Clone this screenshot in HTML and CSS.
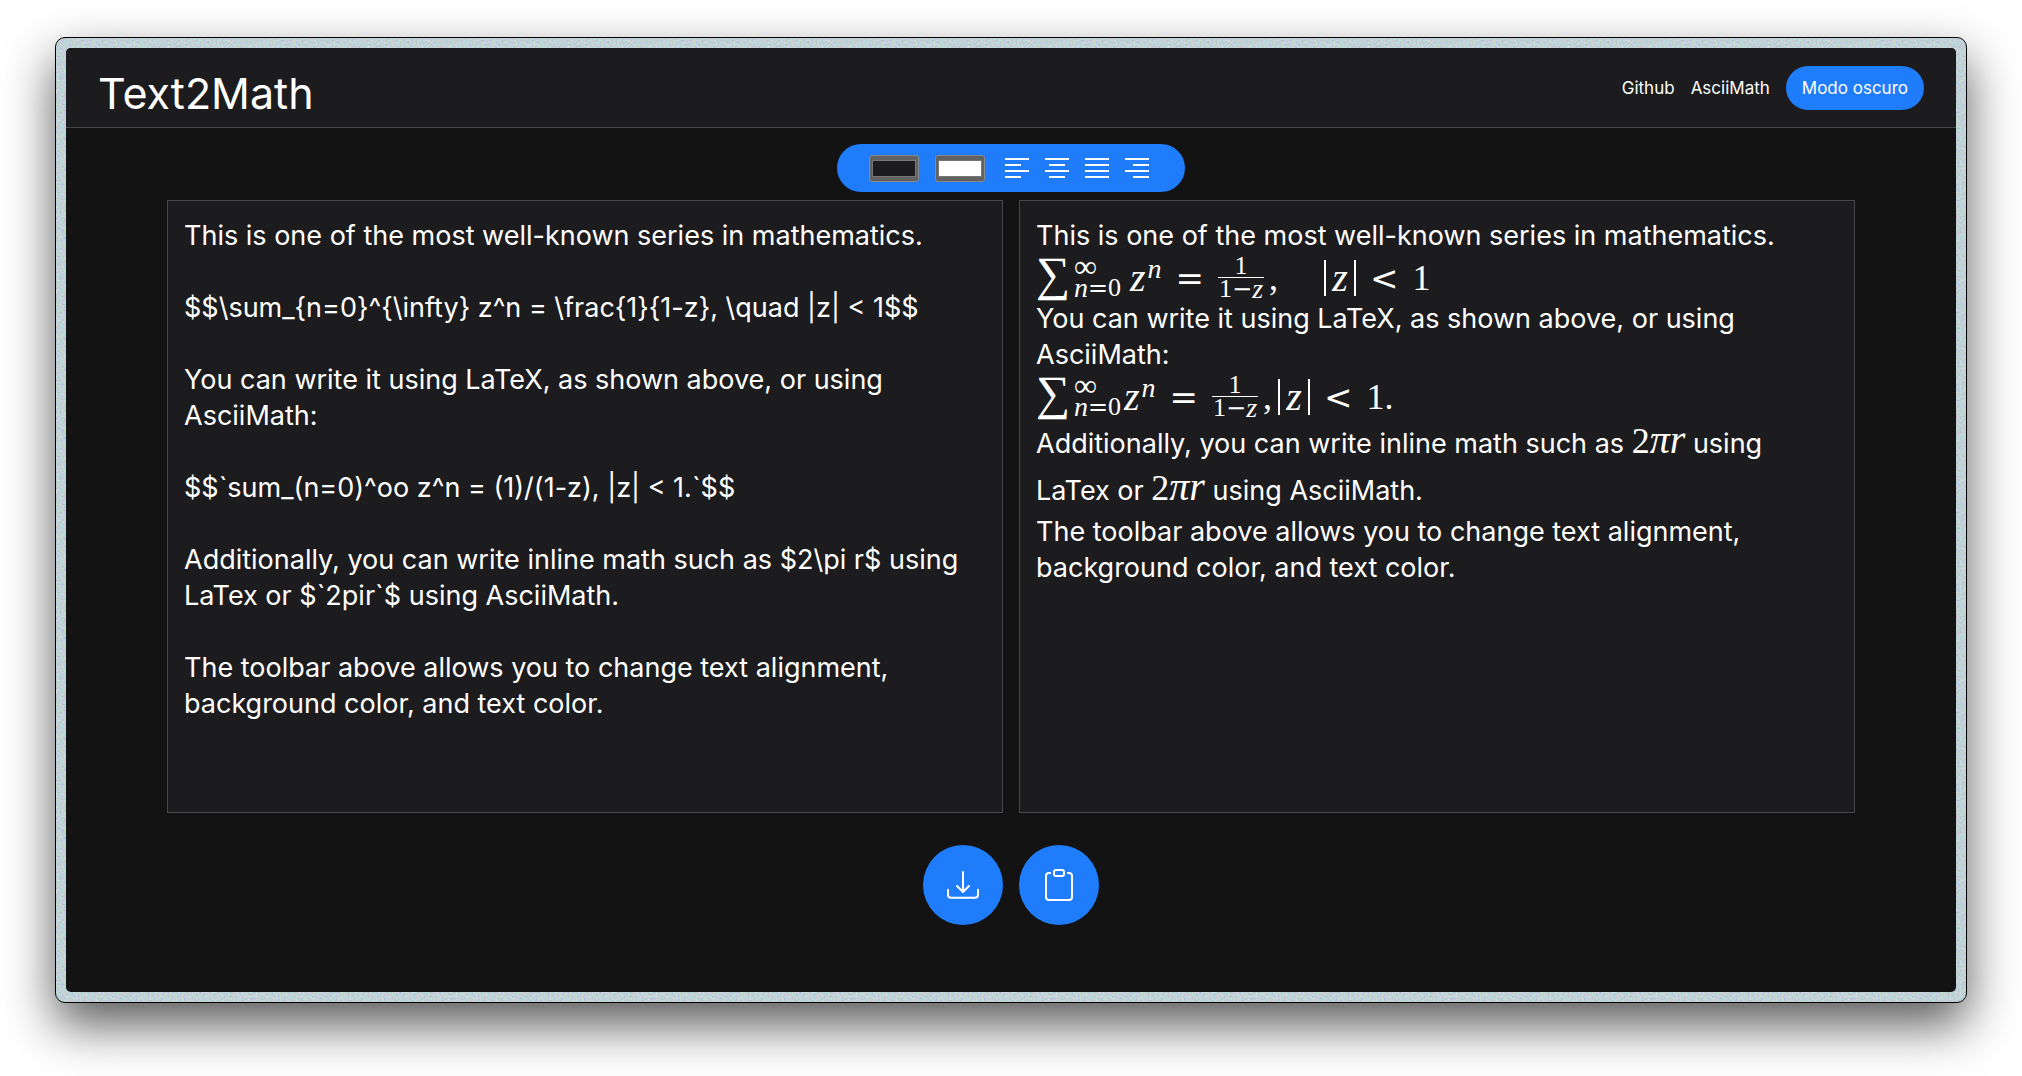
FILE: index.html
```html
<!DOCTYPE html>
<html lang="en">
<head>
<meta charset="utf-8">
<meta name="viewport" content="width=device-width, initial-scale=1">
<title>Text2Math</title>
<link rel="stylesheet" href="styles.css">
</head>
<body>
<div class="window">
  <div class="app">
    <header class="header">
      <h1 class="title">Text2Math</h1>
      <nav class="nav">
        <a class="link" href="#github">Github</a>
        <a class="link" href="#asciimath">AsciiMath</a>
        <button class="theme" type="button">Modo oscuro</button>
      </nav>
    </header>
    <main class="main">
      <div class="toolbar" role="toolbar">
        <div class="colors">
          <input class="color" type="color" value="#1c1c1e" aria-label="Background color">
          <input class="color" type="color" value="#ffffff" aria-label="Text color">
        </div>
        <div class="aligns">
          <button class="align" type="button" aria-label="Align left"><svg class="icon" viewBox="0 0 16 16"><path d="M2 3.5h12M2 6.5h8M2 9.5h12M2 12.5h8"/></svg></button>
          <button class="align" type="button" aria-label="Align center"><svg class="icon" viewBox="0 0 16 16"><path d="M2 3.5h12M4 6.5h8M2 9.5h12M4 12.5h8"/></svg></button>
          <button class="align" type="button" aria-label="Justify"><svg class="icon" viewBox="0 0 16 16"><path d="M2 3.5h12M2 6.5h12M2 9.5h12M2 12.5h12"/></svg></button>
          <button class="align" type="button" aria-label="Align right"><svg class="icon" viewBox="0 0 16 16"><path d="M2 3.5h12M6 6.5h8M2 9.5h12M6 12.5h8"/></svg></button>
        </div>
      </div>
      <div class="panels">
        <textarea class="panel source" aria-label="Source text" spellcheck="false">This is one of the most well-known series in mathematics.

$$\sum_{n=0}^{\infty} z^n = \frac{1}{1-z}, \quad |z| &lt; 1$$

You can write it using LaTeX, as shown above, or using AsciiMath:

$$`sum_(n=0)^oo z^n = (1)/(1-z), |z| &lt; 1.`$$

Additionally, you can write inline math such as $2\pi r$ using LaTex or $`2pir`$ using AsciiMath.

The toolbar above allows you to change text alignment, background color, and text color.</textarea>
        <section class="panel" aria-label="Result">
          <p class="line">This is one of the most well-known series in mathematics.</p>
          <div class="math">
            <span class="sum">∑</span><span class="limits"><span class="inf">∞</span><span class="low"><i>n</i><span class="smallop">=</span>0</span></span><span class="term spaced"><i>z</i><sup class="sup"><i>n</i></sup></span><span class="op">=</span><span class="frac"><span class="num">1</span><span class="den">1<span class="smallop">−</span><i>z</i></span></span><span class="comma">,</span><span class="quad"></span><span class="abs"><i>z</i></span><span class="op">&lt;</span><span>1</span>
          </div>
          <p class="line">You can write it using LaTeX, as shown above, or using AsciiMath:</p>
          <div class="math">
            <span class="sum">∑</span><span class="limits"><span class="inf">∞</span><span class="low"><i>n</i><span class="smallop">=</span>0</span></span><span class="term"><i>z</i><sup class="sup"><i>n</i></sup></span><span class="op">=</span><span class="frac"><span class="num">1</span><span class="den">1<span class="smallop">−</span><i>z</i></span></span><span class="comma">,</span><span class="abs"><i>z</i></span><span class="op">&lt;</span><span>1.</span>
          </div>
          <p class="line tall">Additionally, you can write inline math such as <span class="inline">2<i>πr</i></span> using LaTex or <span class="inline">2<i>πr</i></span> using AsciiMath.</p>
          <p class="line">The toolbar above allows you to change text alignment, background color, and text color.</p>
        </section>
      </div>
      <div class="actions">
        <button class="round" type="button" aria-label="Download"><svg class="glyph" viewBox="0 0 16 16"><path d="M.5 9.9a.5.5 0 0 1 .5.5v2.5a1 1 0 0 0 1 1h12a1 1 0 0 0 1-1v-2.5a.5.5 0 0 1 1 0v2.5a2 2 0 0 1-2 2H2a2 2 0 0 1-2-2v-2.5a.5.5 0 0 1 .5-.5"/><path d="M7.646 11.854a.5.5 0 0 0 .708 0l3-3a.5.5 0 0 0-.708-.708L8.5 10.293V1.5a.5.5 0 0 0-1 0v8.793L5.354 8.146a.5.5 0 1 0-.708.708z"/></svg></button>
        <button class="round" type="button" aria-label="Copy to clipboard"><svg class="glyph" viewBox="0 0 16 16"><path d="M4 1.5H3a2 2 0 0 0-2 2V14a2 2 0 0 0 2 2h10a2 2 0 0 0 2-2V3.5a2 2 0 0 0-2-2h-1v1h1a1 1 0 0 1 1 1V14a1 1 0 0 1-1 1H3a1 1 0 0 1-1-1V3.5a1 1 0 0 1 1-1h1z"/><path d="M9.5 1a.5.5 0 0 1 .5.5v1a.5.5 0 0 1-.5.5h-3a.5.5 0 0 1-.5-.5v-1a.5.5 0 0 1 .5-.5zm-3-1A1.5 1.5 0 0 0 5 1.5v1A1.5 1.5 0 0 0 6.5 4h3A1.5 1.5 0 0 0 11 2.5v-1A1.5 1.5 0 0 0 9.5 0z"/></svg></button>
      </div>
    </main>
  </div>
</div>
</body>
</html>
```
FILE: styles.css
```css
*, *::before, *::after { box-sizing: border-box; }

body {
  margin: 0;
  min-height: 100vh;
  padding: 37px 55px 73px;
  display: flex;
  background: #fff;
  color: #fff;
  font-family: Inter, "Liberation Sans", sans-serif;
}

button, textarea { font: inherit; color: inherit; border: 0; }
button { padding: 0; cursor: pointer; }

.window {
  flex: 1;
  display: flex;
  padding: 10px;
  border: 1px solid #000;
  border-radius: 10px;
  background-color: #b4c8cf;
  background-image: url("data:image/svg+xml,%3Csvg xmlns='http://www.w3.org/2000/svg' width='200' height='200'%3E%3Cfilter id='n'%3E%3CfeTurbulence type='fractalNoise' baseFrequency='.5' numOctaves='2' stitchTiles='stitch'/%3E%3CfeColorMatrix values='1 0 0 0 .12 0 1 0 0 .22 0 0 1 0 .25 0 0 0 0 .5'/%3E%3C/filter%3E%3Crect width='200' height='200' filter='url(%23n)'/%3E%3C/svg%3E");
  box-shadow: 0 22px 50px rgba(0, 0, 0, .65);
}

.app {
  flex: 1;
  display: flex;
  flex-direction: column;
  border-radius: 5px;
  overflow: hidden;
  background: #131313;
}

.header {
  display: flex;
  align-items: center;
  justify-content: space-between;
  height: 80px;
  padding: 0 32px;
  background: #1c1c1e;
  border-bottom: 1px solid #48484a;
}

.title { margin: 0; padding-top: 10px; font-size: 43px; line-height: 56px; font-weight: 400; }

.nav { display: flex; align-items: center; gap: 16px; font-size: 17px; line-height: 20px; }
.link { color: inherit; text-decoration: none; }
.theme { height: 44px; padding: 0 16px; border-radius: 22px; background: #1f7cfb; }

.main {
  flex: 1;
  display: flex;
  flex-direction: column;
  align-items: center;
  padding: 16px 101px 67px;
}

.toolbar {
  display: flex;
  align-items: center;
  gap: 16px;
  height: 48px;
  padding: 0 32px;
  border-radius: 24px;
  background: #1f7cfb;
}
.colors { display: flex; gap: 16px; }
.color {
  appearance: none;
  width: 50px;
  height: 27px;
  padding: 4px 2px;
  border: 1px solid #8a8a8a;
  border-radius: 3px;
  background: #626262;
}
.color::-webkit-color-swatch-wrapper { padding: 0; }
.color::-webkit-color-swatch { border: 1px solid #777; border-radius: 0; }
.aligns { display: flex; gap: 8px; }
.align { display: flex; background: none; }
.icon { width: 32px; height: 32px; fill: none; stroke: #fff; stroke-width: 1; }

.panels {
  flex: 1;
  align-self: stretch;
  display: grid;
  grid-template-columns: 1fr 1fr;
  gap: 16px;
  margin-top: 8px;
}
.panel {
  display: block;
  min-width: 0;
  padding: 17px 16px 16px;
  border: 1px solid #48484a;
  background: #1c1c1e;
  font-size: 27px;
  line-height: 36px;
}
.source { resize: none; outline: 0; overflow: hidden; }

.line { margin: 0; }
.tall { line-height: 47px; }
.inline { font-family: "Liberation Serif", serif; font-size: 36px; line-height: 36px; }
.inline i { font-size: 40px; line-height: 36px; }

.math {
  display: flex;
  align-items: center;
  height: 47px;
  font-family: "Liberation Serif", serif;
  font-size: 36px;
  line-height: 36px;
}
.math i { font-size: 40px; }
.sum { width: 38px; height: 47px; font-size: 48px; line-height: 40px; }
.limits { display: flex; flex-direction: column; width: 50px; font-size: 26px; line-height: 24px; }
.inf { font-size: 32px; line-height: 20px; }
.low, .den { display: flex; }
.math .low i, .math .den i, .math .sup i { font-size: 28px; }
.smallop { font-family: "DejaVu Sans", sans-serif; font-size: 24px; }
.spaced { margin-left: 6px; }
.term { display: flex; }
.sup { padding-left: 2px; line-height: 16px; }
.op { margin: 0 14px; font-family: "DejaVu Sans", sans-serif; font-size: 34px; }
.frac {
  display: flex;
  flex-direction: column;
  width: 46px;
  font-size: 26px;
  line-height: 22px;
}
.num { border-bottom: 1px solid #fff; text-align: center; }
.den { justify-content: center; }
.comma { width: 20px; padding-left: 5px; }
.quad { width: 40px; }
.abs {
  display: flex;
  align-items: center;
  width: 32px;
  height: 36px;
  justify-content: center;
  border: solid #fff;
  border-width: 0 2px;
}

.actions { display: flex; gap: 16px; margin-top: 32px; }
.round {
  display: grid;
  place-items: center;
  width: 80px;
  height: 80px;
  border-radius: 50%;
  background: #1f7cfb;
}
.glyph { width: 32px; height: 32px; fill: #fff; }
```
